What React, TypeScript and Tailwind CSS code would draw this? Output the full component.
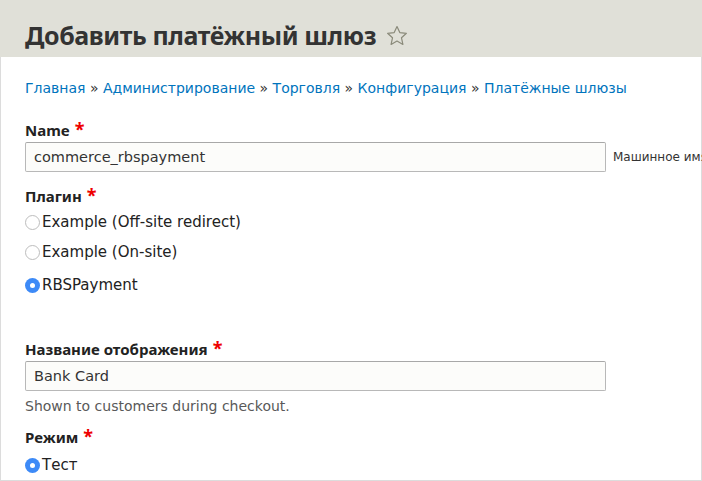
import React from 'react';

function Star() {
  return (
    <svg width="24" height="24" viewBox="0 0 24 24" className="ml-[9px] mt-[2px]">
      <path
        d="M12 2.5l2.8 6.1 6.6.7-4.9 4.5 1.4 6.6L12 17.1l-5.9 3.3 1.4-6.6-4.9-4.5 6.6-.7z"
        fill="none"
        stroke="#8a8a7a"
        strokeWidth="1.2"
        strokeLinejoin="round"
      />
    </svg>
  );
}

function Label({ text }: { text: string }) {
  return (
    <div
      className="flex items-start text-[15px] font-bold leading-[20px] text-[#222]"
      style={{ fontFamily: '"Noto Sans", "DejaVu Sans", sans-serif' }}
    >
      {text}
      <span className="ml-[5px] text-[18px] leading-[18px] text-[#e00]">*</span>
    </div>
  );
}

function Radio({ checked, label }: { checked?: boolean; label: string }) {
  return (
    <label className="flex items-center text-[15px] leading-[20px] text-[#222]">
      {checked ? (
        <span className="flex h-[15px] w-[15px] items-center justify-center rounded-full bg-[#3d8af7]">
          <span className="h-[5px] w-[5px] rounded-full bg-white" />
        </span>
      ) : (
        <span className="h-[15px] w-[15px] rounded-full border border-[#bdbdbd] bg-white" />
      )}
      <span className="ml-[2px]">{label}</span>
    </label>
  );
}

function TextInput({ value }: { value: string }) {
  return (
    <div className="h-[30px] w-[581px] shrink-0 rounded-[2px] border border-[#b8b8b8] border-t-[#a8a8a8] bg-[#fcfcfa] px-[8px] text-[14.5px] leading-[28px] text-[#333]">
      {value}
    </div>
  );
}

export default function App() {
  const crumbs = ['Главная', 'Администрирование', 'Торговля', 'Конфигурация', 'Платёжные шлюзы'];
  return (
    <div
      className="h-[481px] w-[702px] overflow-hidden bg-white"
      style={{ fontFamily: '"DejaVu Sans", "Noto Sans", sans-serif' }}
    >
      <header className="flex h-[57px] items-center bg-[#e0e0d8] pl-[25px] pt-[12px]">
        <h1
          className="text-[25px] font-bold leading-[32px] tracking-[-0.4px] text-[#333]"
          style={{ fontFamily: '"Noto Sans", "DejaVu Sans", sans-serif' }}
        >
          Добавить платёжный шлюз
        </h1>
        <Star />
      </header>
      <main className="h-[424px] border-x border-b border-[#dcdcdc] pl-[24px]">
        <nav className="pt-[21px] text-[14px] leading-[20px] text-[#0074bd]">
          {crumbs.map((c, i) => (
            <span key={c}>
              {i > 0 && <span className="text-[#333]"> » </span>}
              {c}
            </span>
          ))}
        </nav>

        <div className="mt-[22px]">
          <Label text="Name" />
          <div className="mt-[2px] flex items-center">
            <TextInput value="commerce_rbspayment" />
            <span className="ml-[7px] whitespace-nowrap text-[12px] text-[#333]">Машинное имя</span>
          </div>
        </div>

        <div className="mt-[14px]">
          <Label text="Плагин" />
          <div className="mt-[6px] flex flex-col gap-[10px]">
            <Radio label="Example (Off-site redirect)" />
            <Radio label="Example (On-site)" />
            <div className="mt-[3px]">
              <Radio checked label="RBSPayment" />
            </div>
          </div>
        </div>

        <div className="mt-[44px]">
          <Label text="Название отображения" />
          <div className="mt-[2px]">
            <TextInput value="Bank Card" />
          </div>
          <div className="mt-[6px] text-[14px] leading-[18px] text-[#595959]">Shown to customers during checkout.</div>
        </div>

        <div className="mt-[12px]">
          <Label text="Режим" />
          <div className="mt-[8px]">
            <Radio checked label="Тест" />
          </div>
        </div>
      </main>
    </div>
  );
}
